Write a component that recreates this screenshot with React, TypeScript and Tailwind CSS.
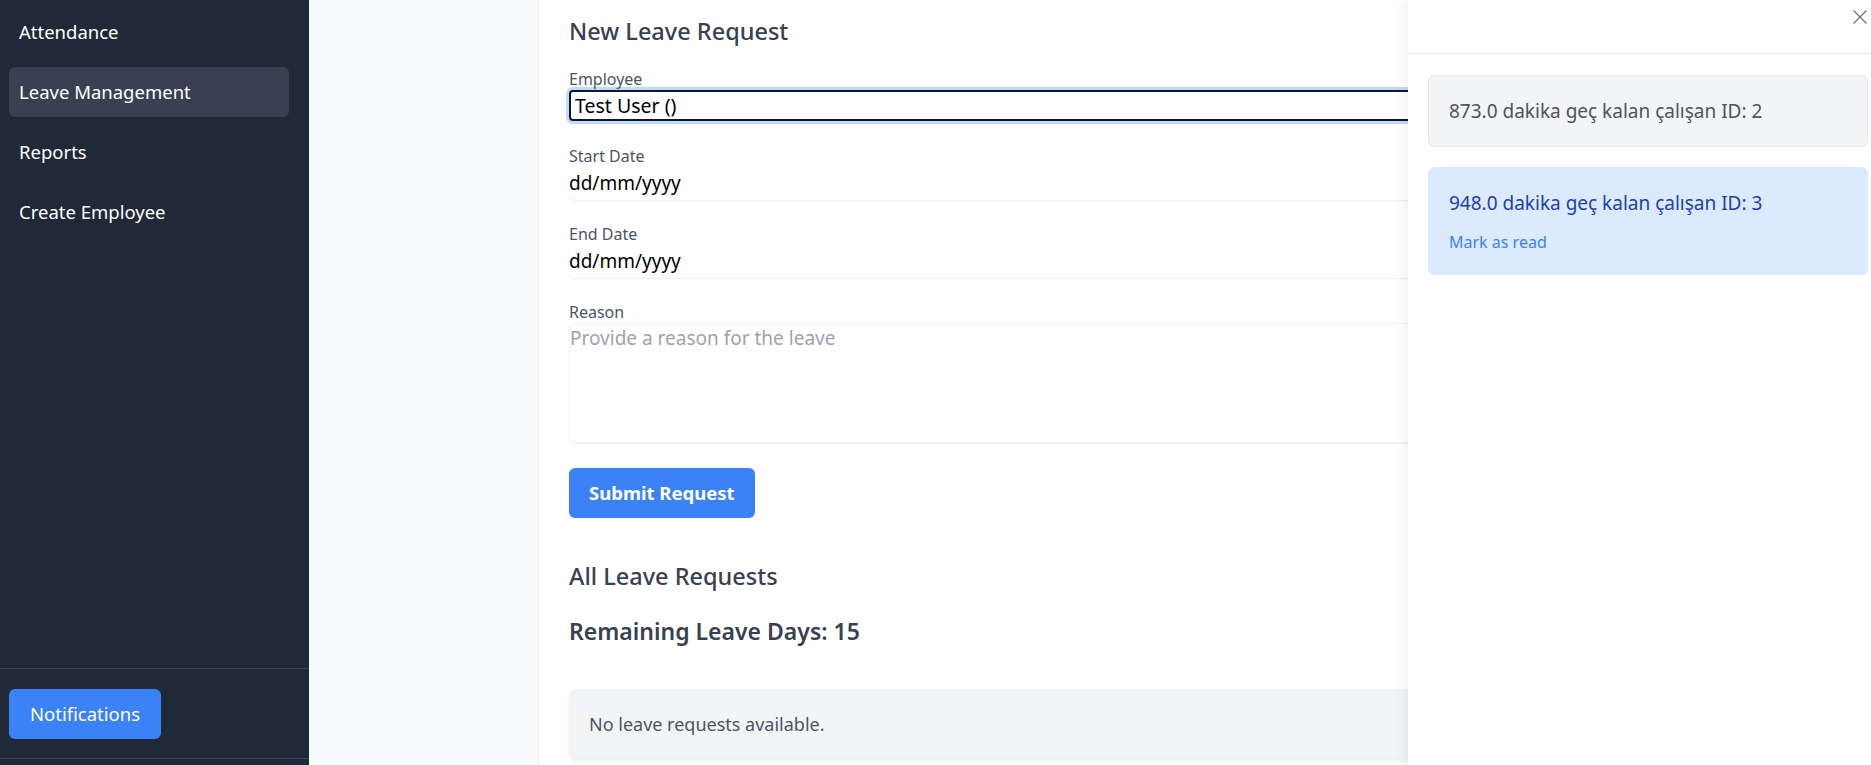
import { useState } from "react";

const navItems = ["Attendance", "Leave Management", "Reports", "Create Employee"];

type Note = { id: number; text: string; read: boolean };

const notes: Note[] = [
  { id: 1, text: "873.0 dakika geç kalan çalışan ID: 2", read: true },
  { id: 2, text: "948.0 dakika geç kalan çalışan ID: 3", read: false },
];

function Sidebar() {
  return (
    <aside className="w-[309px] shrink-0 h-full bg-[#1f2937] text-white flex flex-col justify-between">
      <nav className="pt-[7px] flex flex-col gap-[10px]">
        {navItems.map((item) => (
          <a
            key={item}
            href="#"
            className={
              item === "Leave Management"
                ? "ml-[9px] w-[280px] h-[50px] flex items-center px-[10px] rounded-md bg-[#374151] text-[18.5px]"
                : "ml-[9px] w-[280px] h-[50px] flex items-center px-[10px] rounded-md text-[18.5px]"
            }
          >
            {item}
          </a>
        ))}
      </nav>
      <div>
        <div className="border-t border-[#374151] px-[9px] pt-[20px] pb-[19px]">
          <button className="h-[50px] w-[152px] rounded-md bg-[#3b82f6] text-white text-[18.5px]">
            Notifications
          </button>
        </div>
        <div className="border-t border-[#374151] h-[7px]" />
      </div>
    </aside>
  );
}

function Field({ label, children, last }: { label: string; children: React.ReactNode; last?: boolean }) {
  return (
    <div className={last ? "" : "mb-[23px]"}>
      <label className="block text-[16px] leading-[22px] text-[#4b5563]">{label}</label>
      {children}
    </div>
  );
}

function LeaveForm() {
  return (
    <div className="w-[1102px] mx-auto min-h-full bg-white shadow-[0_0_6px_rgba(0,0,0,0.06)] px-[30px] pt-[15px]">
      <h2 className="text-[23.5px] leading-[32px] font-medium text-[#374151] mb-[21px]">New Leave Request</h2>

      <div className="mb-[24px]">
        <label className="block text-[16px] leading-[22px] text-[#4b5563]">Employee</label>
        <div className="h-[31px] border-2 border-[#111827] rounded-[4px] ring-[3px] ring-[#bfdbfe] pl-[4px] text-[19.5px] leading-[27px] text-black">
          Test User ()
        </div>
      </div>

      <Field label="Start Date">
        <div className="h-[33px] rounded-md shadow-[0_1px_2px_rgba(0,0,0,0.07)] text-[19px] leading-[33px] text-black">
          dd/mm/yyyy
        </div>
      </Field>

      <Field label="End Date">
        <div className="h-[33px] rounded-md shadow-[0_1px_2px_rgba(0,0,0,0.07)] text-[19px] leading-[33px] text-black">
          dd/mm/yyyy
        </div>
      </Field>

      <Field label="Reason" last>
        <div className="h-[120px] rounded-md border border-[#f3f4f6] shadow-[0_1px_2px_rgba(0,0,0,0.05)] pt-[1px] text-[19px] leading-[26px] text-[#9ca3af]">
          Provide a reason for the leave
        </div>
      </Field>

      <button className="mt-[25px] h-[50px] px-5 rounded-md bg-[#3b82f6] text-white text-[18.5px] font-bold">
        Submit Request
      </button>

      <h2 className="mt-[42px] text-[23.5px] leading-[32px] font-medium text-[#374151]">All Leave Requests</h2>
      <h3 className="mt-[23px] text-[23px] leading-[32px] font-semibold text-[#374151]">Remaining Leave Days: 15</h3>

      <div className="mt-[42px] rounded-lg bg-[#f3f4f6] shadow-[0_2px_4px_rgba(0,0,0,0.08)] px-5 py-[21px] text-[18px] leading-[28px] text-[#4b5563]">
        No leave requests available.
      </div>
    </div>
  );
}

function NotificationDrawer() {
  const [items, setItems] = useState(notes);
  return (
    <div className="fixed top-0 right-0 h-full w-[463px] bg-white shadow-[-4px_0_12px_rgba(0,0,0,0.06)] flex flex-col">
      <div className="h-[54px] shrink-0 border-b border-[#e5e7eb] flex justify-end items-start pt-[10px] pr-[4px]">
        <button className="text-[#6b7280]" aria-label="Close">
          <svg width="14" height="14" viewBox="0 0 14 14" fill="none" stroke="currentColor" strokeWidth="1.3">
            <path d="M0.5 0.5L13.5 13.5M13.5 0.5L0.5 13.5" />
          </svg>
        </button>
      </div>
      <div className="pl-5 pr-[3px] pt-[21px] flex flex-col gap-5">
        {items.map((n) =>
          n.read ? (
            <div key={n.id} className="rounded-md border border-[#e5e7eb] bg-[#f3f4f6] p-5 text-[19px] leading-[30px] text-[#4b5563]">
              {n.text}
            </div>
          ) : (
            <div key={n.id} className="rounded-md border border-[#dbeafe] bg-[#dbeafe] p-5">
              <p className="text-[19px] leading-[30px] text-[#1e40af]">{n.text}</p>
              <button
                onClick={() => setItems(items.map((x) => (x.id === n.id ? { ...x, read: true } : x)))}
                className="mt-3 block text-[16px] leading-[24px] text-[#3b82f6]"
              >
                Mark as read
              </button>
            </div>
          )
        )}
      </div>
    </div>
  );
}

export default function App() {
  return (
    <div className="h-screen w-full flex overflow-hidden font-['Noto_Sans',sans-serif]">
      <Sidebar />
      <main className="flex-1 h-full bg-[#f9fafb] overflow-hidden">
        <LeaveForm />
      </main>
      <NotificationDrawer />
    </div>
  );
}
